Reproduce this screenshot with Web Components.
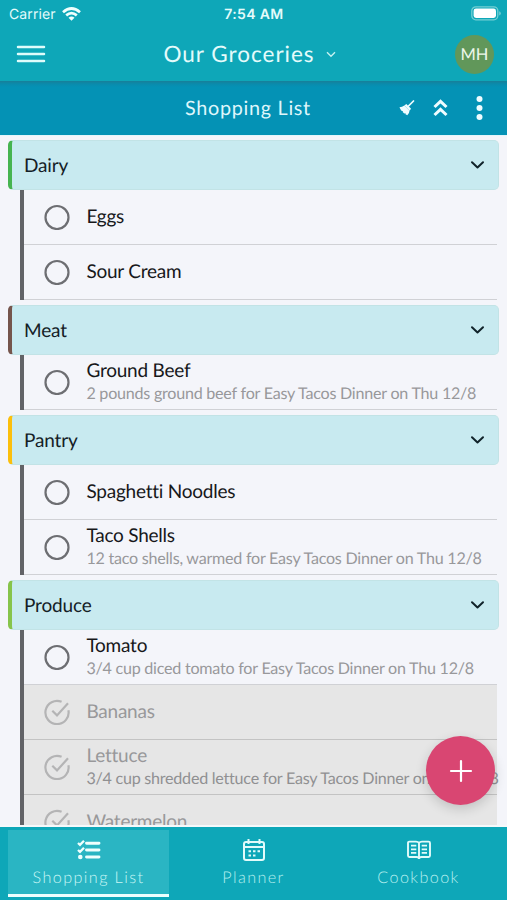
<!DOCTYPE html>
<html lang="en">
<head>
<meta charset="utf-8">
<title>Shopping List</title>
<style>
html, body { margin: 0; height: 100%; }
body { font-family: Lato, "Liberation Sans", sans-serif; overflow: hidden; background: #f4f5fa; text-rendering: geometricPrecision; font-variant-ligatures: none; }
</style>
</head>
<body>
<grocery-app></grocery-app>
<script>
const define = (name, html, setup) => {
  const template = document.createElement('template');
  template.innerHTML = html;
  customElements.define(name, class extends HTMLElement {
    constructor() {
      super();
      this.attachShadow({ mode: 'open' }).append(template.content.cloneNode(true));
    }
    connectedCallback() { if (setup) setup(this, this.shadowRoot); }
  });
};

define('status-bar', `
<style>
:host { display: grid; grid-template-columns: 1fr auto 1fr; align-items: center; height: 27px; padding: 0 8px 0 9px; box-sizing: border-box; color: #e4fbfb; font-family: Inter, Roboto, sans-serif; font-size: 14px; }
.left { display: flex; align-items: center; gap: 6px; letter-spacing: .1px; }
.time { font-weight: 600; letter-spacing: .35px; }
.left span, .time { padding-top: 1px; }
.battery { justify-self: end; margin-right: -2px; }
svg { display: block; }
</style>
<div class="left"><span>Carrier</span>
<svg width="19" height="14" viewBox="0 0 19 14" fill="none" stroke="#effffd" stroke-width="2.7"><path d="M1 5.2Q9.5-2.2 18 5.2M4.2 8.4Q9.5 4 14.8 8.4"/><path d="M6.5 10.7Q9.5 8.4 12.5 10.7L9.5 13.8Z" fill="#effffd" stroke="none"/></svg></div>
<span class="time">7:54 AM</span>
<svg class="battery" width="30" height="15" viewBox="0 0 30 15"><rect x=".8" y=".8" width="26" height="13" rx="4" fill="none" stroke="#74cfd3" stroke-width="1.3"/><rect x="2.6" y="2.6" width="22.4" height="9.4" rx="2.4" fill="#fff"/><path d="M28.2 5.2q1.6.6 1.6 2.2t-1.6 2.2z" fill="#74cfd3"/></svg>`);

define('app-header', `
<style>
:host { display: grid; grid-template-columns: 60px 1fr 60px; align-items: center; height: 54px; padding: 0 13px 0 16px; box-sizing: border-box; color: #e4fbfb; }
.title { display: flex; align-items: center; justify-content: center; gap: 11px; font-size: 22.5px; letter-spacing: 1px; white-space: nowrap; padding: 0 11px 1px 0; }
.avatar { justify-self: end; width: 39px; height: 39px; border-radius: 50%; background: #61975a; display: grid; place-items: center; font-size: 16.5px; color: #eef7ea; }
svg { display: block; }
.title svg { margin-top: 2px; }
</style>
<svg width="30" height="20" viewBox="0 0 30 20" stroke="#dffcfb" stroke-width="2.5" stroke-linecap="round"><path d="M2 3H28M2 10H28M2 17H28"/></svg>
<div class="title"><slot></slot><svg width="10" height="7" viewBox="0 0 10 7" fill="none" stroke="#c5f2f1" stroke-width="1.4"><path d="M1 1.2L5 5.2 9 1.2"/></svg></div>
<div class="avatar">MH</div>`);

define('list-toolbar', `
<style>
:host { display: grid; grid-template-columns: 1fr auto 1fr; align-items: center; height: 54px; box-sizing: border-box; padding: 0 24px 0 13px; color: #dff6fb; background: linear-gradient(#187f99 0, #0a8bac 3px, #0492b5 6px); font-size: 19.8px; letter-spacing: .7px; }
.title { grid-column: 2; }
.actions { display: flex; align-items: center; justify-content: flex-end; margin-top: -1px; }
svg { display: block; }
</style>
<span class="title"><slot></slot></span>
<div class="actions">
<svg style="margin-right:18px" width="16" height="16" viewBox="0 0 16 16" fill="#effcff"><path d="M14.5 1L9.5 6" stroke="#effcff" stroke-width="1.7" stroke-linecap="round"/><path d="M7.3 3.9L12.1 8.7 10.5 10.7 5.3 5.5Z"/><path d="M5.3 5.5L10.5 10.7Q10.4 13.5 8.3 15.2L6.5 14.2 6.6 13.2 5.3 13.5 3.6 12 4 11.1 2.7 11Q1.3 9.5.5 7.2 3.2 7 5.3 5.5Z"/></svg>
<svg style="margin-right:28px" width="15" height="18" viewBox="0 0 15 18" fill="none" stroke="#effcff" stroke-width="3"><path d="M1.5 8L7.5 2.3 13.5 8M1.5 16L7.5 10.3 13.5 16"/></svg>
<svg width="7" height="26" viewBox="0 0 7 26" fill="#effcff"><circle cx="3.5" cy="4" r="3"/><circle cx="3.5" cy="13" r="3"/><circle cx="3.5" cy="22" r="3"/></svg>
</div>`);

define('grocery-group', `
<style>
:host { display: block; padding-bottom: 5px; }
.head { display: flex; align-items: center; justify-content: space-between; height: 50px; box-sizing: border-box; border: 1px solid #c2e3e6; border-left: 4px solid var(--accent); border-radius: 5px; background: #c8eaf0; padding: 0 13px 0 12px; color: #142026; font-size: 19px; letter-spacing: -.15px; }
#name { padding-top: 2px; line-height: 22px; }
.items { margin: 0 2px 0 12px; }
svg { display: block; }
</style>
<div class="head"><span id="name"></span><svg width="15" height="10" viewBox="0 0 15 10" fill="none" stroke="#11232a" stroke-width="2" stroke-linecap="round" stroke-linejoin="round"><path d="M2 2.3L7.5 7.5 13 2.3"/></svg></div>
<div class="items"><slot></slot></div>`, (el, root) => {
  root.getElementById('name').textContent = el.getAttribute('name');
});

define('grocery-item', `
<style>
:host { display: flex; align-items: center; height: 55px; box-sizing: border-box; border-left: 4px solid #626367; color: #17181a; box-shadow: inset 0 -1px #d0d1d5; }
:host([done]) { background: #e6e6e6; color: #98989a; box-shadow: inset 0 -1px #c3c3c3; }
.mark { width: 26px; height: 26px; flex: none; margin: 0 16.4px 1px 20px; color: #6d6e72; }
:host([done]) .mark { color: #b4b4b5; }
.text { display: flex; flex-direction: column; white-space: nowrap; padding-bottom: 1px; }
.name { font-size: 19px; line-height: 23px; letter-spacing: -.23px; margin: -1px 0 1px; }
.note { font-size: 16.1px; line-height: 22px; letter-spacing: -.24px; color: #98989b; }
:host([done]) .note { color: #909092; }
.tick, :host([done]) .ring { display: none; }
:host([done]) .tick { display: block; }
svg { display: block; }
</style>
<svg class="mark" viewBox="0 0 26 26" fill="none" stroke="currentColor" stroke-width="2.2">
<circle class="ring" cx="13" cy="13.5" r="11.5"/>
<path class="tick" d="M24.4 11.2A11.6 11.6 0 1 1 17.6 2.8M8.3 11.8L13 16.4 24 4.3"/></svg>
<div class="text"><span class="name"><slot></slot></span></div>`, (el, root) => {
  const note = el.getAttribute('note');
  if (note) {
    const span = document.createElement('span');
    span.className = 'note';
    span.textContent = note;
    root.querySelector('.text').append(span);
  }
});

define('add-button', `
<style>
:host { display: grid; place-items: center; width: 69px; height: 69px; border-radius: 50%; background: #d94672; box-shadow: 0 4px 12px rgba(0,0,0,.16); }
</style>
<svg width="24" height="24" viewBox="0 0 24 24" stroke="#fff" stroke-width="2.2" stroke-linecap="round"><path d="M12 2V22M2 12H22"/></svg>`);

define('nav-tab', `
<style>
:host { display: flex; flex-direction: column; align-items: center; box-sizing: border-box; height: 67px; padding-top: 6px; border-bottom: 3px solid transparent; color: #b4eeee; font-size: 16.2px; letter-spacing: 1.4px; font-weight: 300; }
:host([active]) { background: #2ab5c3; border-bottom-color: #ecfffe; color: #c9f5f5; }
.icon { height: 27px; display: grid; place-items: center; }
.label { line-height: 30px; }
</style>
<div class="icon"><slot name="icon"></slot></div><span class="label"><slot></slot></span>`);

define('grocery-app', `
<style>
:host { display: flex; flex-direction: column; width: 507px; height: 900px; position: relative; overflow: hidden; background: #f4f5fa; }
.top { background: #0ea7b8; flex: none; }
.list { flex: 1; min-height: 0; overflow: hidden; padding: 4px 8px 0; box-sizing: border-box; border-top: 1px solid #e3f5fa; border-bottom: 2px solid #f6f9fb; }
nav { flex: none; display: grid; grid-template-columns: 161px 161px 161px; column-gap: 4px; height: 73px; padding: 3px 8px 0; box-sizing: border-box; background: #0ea7b8; }
add-button { position: absolute; left: 426px; top: 736px; }
svg { display: block; }
</style>
<div class="top"><status-bar></status-bar><app-header>Our Groceries</app-header></div>
<list-toolbar>Shopping List</list-toolbar>
<div class="list">
<grocery-group name="Dairy" style="--accent:#46b450"><grocery-item>Eggs</grocery-item><grocery-item>Sour Cream</grocery-item></grocery-group>
<grocery-group name="Meat" style="--accent:#75554c"><grocery-item note="2 pounds ground beef for Easy Tacos Dinner on Thu 12/8">Ground Beef</grocery-item></grocery-group>
<grocery-group name="Pantry" style="--accent:#fbbf0c"><grocery-item>Spaghetti Noodles</grocery-item><grocery-item note="12 taco shells, warmed for Easy Tacos Dinner on Thu 12/8">Taco Shells</grocery-item></grocery-group>
<grocery-group name="Produce" style="--accent:#86c44b"><grocery-item note="3/4 cup diced tomato for Easy Tacos Dinner on Thu 12/8">Tomato</grocery-item><grocery-item done>Bananas</grocery-item><grocery-item done note="3/4 cup shredded lettuce for Easy Tacos Dinner on Thu 12/8">Lettuce</grocery-item><grocery-item done>Watermelon</grocery-item></grocery-group>
</div>
<nav>
<nav-tab active><svg slot="icon" width="24" height="20" viewBox="0 0 24 20" fill="none" stroke="#effffe" stroke-width="3"><path d="M9.5 3.2H22M9.5 10H22M9.5 17H22" stroke-linecap="round" stroke-width="2.9"/><path d="M1 3L3 4.9 7 .8M1 10L3 11.9 7 7.8" stroke-width="2.3"/><circle cx="3.3" cy="17" r="2.3" fill="#effffe" stroke="none"/></svg>Shopping List</nav-tab>
<nav-tab><svg slot="icon" width="22" height="22" viewBox="0 0 22 22" fill="none" stroke="#e2fbfa" stroke-width="2"><rect x="1" y="3" width="20" height="18" rx="2"/><path d="M1 8H21M5.5 0V5M16.5 0V5"/><path d="M5.5 12.3H8M10 12.3H12.5M14.5 12.3H17M5.5 16.5H8M10 16.5H12.5"/></svg>Planner</nav-tab>
<nav-tab><svg slot="icon" width="24" height="20" viewBox="0 0 24 20" fill="none" stroke="#e2fbfa" stroke-width="1.9"><path d="M12 2.8Q11 1.6 9 1.6H2.4Q1 1.6 1 3V15.5Q1 17 2.4 17H9.5Q12 17 12 19Q12 17 14.5 17H21.6Q23 17 23 15.5V3Q23 1.6 21.6 1.6H15Q13 1.6 12 2.8V18"/><path d="M4 5.7H9.3M4 9.3H9.3M4 12.9H9.3M14.7 5.7H20M14.7 9.3H20M14.7 12.9H20" stroke-width="1.7"/></svg>Cookbook</nav-tab>
</nav>
<add-button></add-button>`);
</script>
</body>
</html>
